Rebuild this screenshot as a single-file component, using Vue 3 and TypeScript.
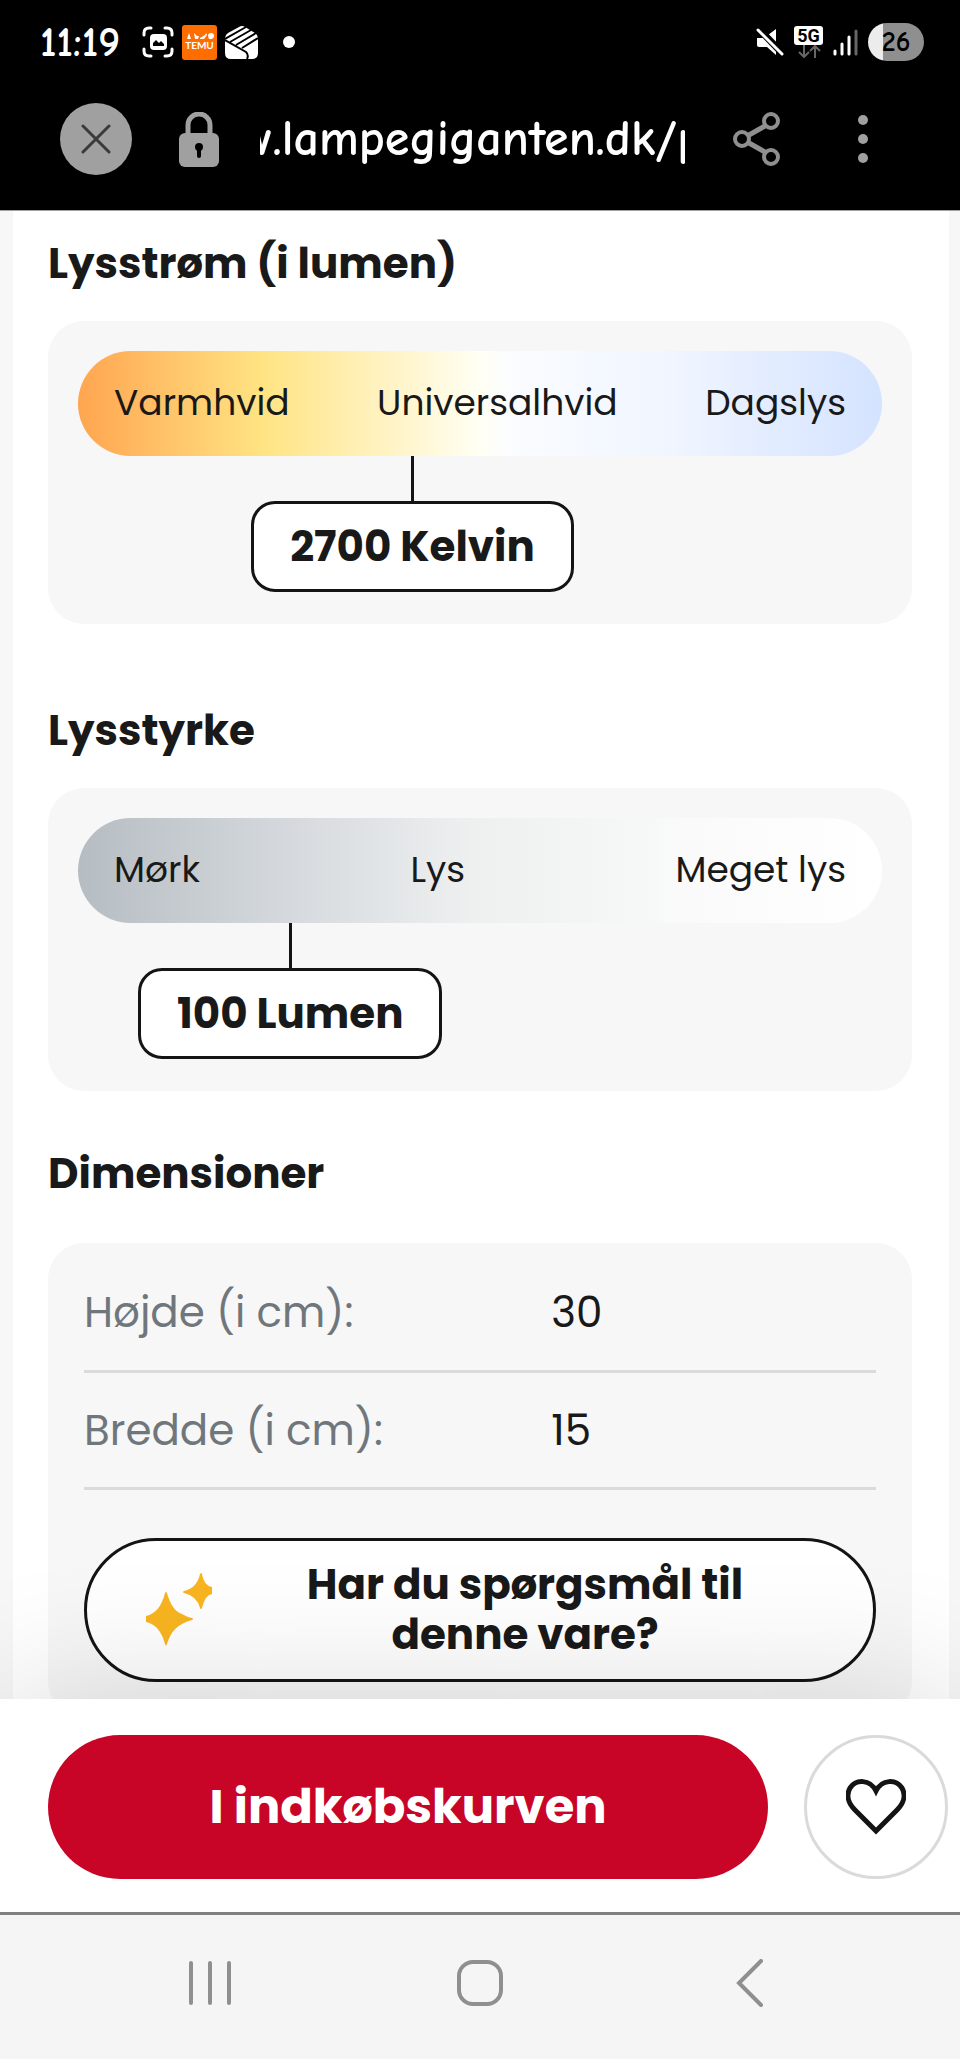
<script setup lang="ts">
interface Scale {
  title: string
  tone: string
  labels: string[]
  value: string
  position: number
}

interface Dimension {
  label: string
  value: string
}

const scales: Scale[] = [
  {
    title: 'Lysstrøm (i lumen)',
    tone: 'warmth',
    labels: ['Varmhvid', 'Universalhvid', 'Dagslys'],
    value: '2700 Kelvin',
    position: 41.6,
  },
  {
    title: 'Lysstyrke',
    tone: 'brightness',
    labels: ['Mørk', 'Lys', 'Meget lys'],
    value: '100 Lumen',
    position: 26.4,
  },
]

const dimensions: Dimension[] = [
  { label: 'Højde (i cm):', value: '30' },
  { label: 'Bredde (i cm):', value: '15' },
]
</script>

<template>
  <div class="phone">
    <div class="status">
      <div class="status-left">
        <span class="time">11:19</span>
        <svg class="capture" viewBox="0 0 32 32" width="32" height="32" aria-hidden="true">
          <g fill="none" stroke="#fff" stroke-width="3" stroke-linecap="round">
            <path d="M2 9V7q0-5 5-5h2M23 2h2q5 0 5 5v2M30 23v2q0 5-5 5h-2M9 30H7q-5 0-5-5v-2" />
          </g>
          <rect x="8" y="8" width="17" height="16" rx="4" fill="#fff" />
          <path d="M11 20v-3l3-3 3 3 2-2 3 3v2z" fill="#000" />
        </svg>
        <span class="temu">
          <svg viewBox="0 0 28 7" width="28" height="7" aria-hidden="true">
            <path
              d="M1 6l1-3 1-3 1 3 1 3zM8 0l3 3 2 0-1 3H9zM14 5l5-3 1-2 1 2-3 4h-4zM22 3q0-3 3-3t3 3v1l-2 2h-3z"
              fill="#fff"
            />
          </svg>
          <span>TEMU</span>
        </span>
        <svg class="cube" viewBox="0 0 33 33" width="33" height="33" aria-hidden="true">
          <path
            d="M14 1q3-2 6 0l10 6q3 2 3 5v15q0 6-6 6H6q-6 0-6-6V12q0-3 3-5z"
            fill="#fff"
          />
          <path
            d="M0 13L21 1M5 16L26 4M11 19L31 7M17 22L33 12M0 14l21 12q3 3 1 7"
            fill="none"
            stroke="#000"
            stroke-width="2"
          />
        </svg>
        <span class="dot"></span>
      </div>
      <div class="status-right">
        <svg viewBox="0 0 28 28" width="28" height="28" aria-hidden="true">
          <path d="M1 10h7L20 1v26l-9-8H3q-2 0-2-2z" fill="#fff" />
          <path d="M2 0l25 26" stroke="#000" stroke-width="7" />
          <path d="M2 2l24 24" stroke="#fff" stroke-width="3" stroke-linecap="round" />
        </svg>
        <span class="network">
          <span class="network-name">5G</span>
          <svg viewBox="0 0 24 13" width="24" height="13" aria-hidden="true">
            <path
              d="M7 0v11M2 7l5 5 5-5M18 13V2M13 6l5-5 5 5"
              fill="none"
              stroke="#666"
              stroke-width="2"
            />
          </svg>
        </span>
        <svg class="signal" viewBox="0 0 25 27" width="25" height="27" aria-hidden="true">
          <g stroke-width="3" stroke-linecap="round" stroke="#fff">
            <path d="M2 22v3M9 15v10M16 8v17" />
            <path d="M23 2v23" stroke="#666" />
          </g>
        </svg>
        <span class="battery">26</span>
      </div>
    </div>

    <header class="browser">
      <button class="close" type="button" aria-label="Luk">
        <svg viewBox="0 0 30 30" width="30" height="30" aria-hidden="true">
          <path d="M2 2l26 26M28 2L2 28" stroke="#3a3a3a" stroke-width="3" stroke-linecap="round" />
        </svg>
      </button>
      <svg class="lock" viewBox="0 0 40 55" width="40" height="55" aria-hidden="true">
        <path d="M9 24V13a11 11 0 0 1 22 0v11" fill="none" stroke="#a0a0a0" stroke-width="5" />
        <rect y="21" width="40" height="34" rx="6" fill="#a0a0a0" />
        <circle cx="20" cy="35" r="4" fill="#000" />
        <path d="M20 35v9" stroke="#000" stroke-width="4" stroke-linecap="round" />
      </svg>
      <a class="url" href="#"><span>w.lampegiganten.dk/p</span></a>
      <button class="share" type="button" aria-label="Del">
        <svg viewBox="0 0 48 54" width="48" height="54" aria-hidden="true">
          <g fill="none" stroke="#8f8f8f" stroke-width="4">
            <path d="M16 23l16-9M16 31l16 9" stroke-width="5" />
            <circle cx="9" cy="27" r="7" />
            <circle cx="38" cy="9" r="7" />
            <circle cx="38" cy="45" r="7" />
          </g>
        </svg>
      </button>
      <button class="more" type="button" aria-label="Flere muligheder">
        <svg viewBox="0 0 10 48" width="10" height="48" aria-hidden="true">
          <g fill="#a0a0a0">
            <circle cx="5" cy="5" r="5" />
            <circle cx="5" cy="24" r="5" />
            <circle cx="5" cy="43" r="5" />
          </g>
        </svg>
      </button>
    </header>

    <main class="page">
      <div class="sheet">
        <section v-for="scale in scales" :key="scale.title" class="group">
          <h2>{{ scale.title }}</h2>
          <div class="panel">
            <div class="bar" :class="scale.tone">
              <span v-for="label in scale.labels" :key="label">{{ label }}</span>
            </div>
            <div class="marker" :style="{ marginLeft: scale.position + '%' }">
              <span class="stem"></span>
              <strong class="badge">{{ scale.value }}</strong>
            </div>
          </div>
        </section>

        <section class="group dimensions">
          <h2>Dimensioner</h2>
          <div class="panel details">
            <table>
              <tbody>
                <tr v-for="row in dimensions" :key="row.label">
                  <th scope="row">{{ row.label }}</th>
                  <td>{{ row.value }}</td>
                </tr>
              </tbody>
            </table>
            <button class="question" type="button">
              <svg viewBox="0 0 68 74" width="68" height="74" aria-hidden="true">
                <g fill="#f9b520">
                  <path
                    d="M20 20q1-2 2 0 5 18 15 21 5 3 10 4 2 1 0 2-20 5-25 24-1 3-2 0Q15 52 1 49V43Q15 40 20 20z"
                  />
                  <path
                    d="M55 1q1-2 2 0 2 12 10 13v7q-7 1-10 14-1 2-2 0-3-12-16-15-2-1 0-2Q52 15 55 1z"
                  />
                </g>
              </svg>
              <span>Har du spørgsmål til denne vare?</span>
            </button>
          </div>
        </section>
      </div>
    </main>

    <div class="buy">
      <button class="cart" type="button">I indkøbskurven</button>
      <button class="favourite" type="button" aria-label="Gem som favorit">
        <svg viewBox="0 0 60 56" width="60" height="56" aria-hidden="true">
          <path
            d="M30 52L9 31C2 24 0 16 4 9 10 0 24 0 30 12 36 0 50 0 56 9c4 7 2 15-5 22z"
            fill="none"
            stroke="#141414"
            stroke-width="5"
          />
        </svg>
      </button>
    </div>

    <nav class="system">
      <button type="button" aria-label="Seneste apps">
        <svg viewBox="0 0 44 48" width="44" height="48" aria-hidden="true">
          <path d="M3 4v40M22 4v40M41 4v40" stroke="#8f8f8f" stroke-width="4" stroke-linecap="round" />
        </svg>
      </button>
      <button type="button" aria-label="Hjem">
        <svg viewBox="0 0 48 48" width="48" height="48" aria-hidden="true">
          <rect x="3" y="3" width="42" height="42" rx="14" fill="none" stroke="#8f8f8f" stroke-width="4" />
        </svg>
      </button>
      <button type="button" aria-label="Tilbage">
        <svg viewBox="0 0 28 48" width="28" height="48" aria-hidden="true">
          <path d="M25 2L3 24l22 22" fill="none" stroke="#8f8f8f" stroke-width="4" stroke-linecap="round" />
        </svg>
      </button>
    </nav>
  </div>
</template>

<style>
body {
  margin: 0;
}
</style>

<style scoped>
.phone {
  display: flex;
  flex-direction: column;
  height: 100vh;
  background: #f7f7f7;
  color: #191919;
  font-family: Poppins, Inter, 'Liberation Sans', sans-serif;
}

.phone * {
  box-sizing: border-box;
}

svg {
  display: block;
  flex: none;
}

button {
  display: flex;
  align-items: center;
  justify-content: center;
  padding: 0;
  border: 0;
  background: none;
  color: inherit;
  font: inherit;
}

.status {
  display: flex;
  flex: none;
  justify-content: space-between;
  height: 76px;
  padding: 8px 36px 0 40px;
  background: #000;
  color: #fff;
  font-family: 'Comic Neue', Lato, sans-serif;
}

.status-left,
.status-right {
  display: flex;
  align-items: center;
}

.time {
  width: 84px;
  font-size: 42px;
  font-weight: 700;
}

.capture {
  margin-left: 18px;
}

.temu {
  display: flex;
  flex-direction: column;
  align-items: center;
  justify-content: center;
  width: 35px;
  height: 35px;
  margin: 0 8px;
  border-radius: 3px;
  background: #ff6d00;
  font-family: Lato, sans-serif;
  font-size: 10px;
  font-weight: 700;
  line-height: 11px;
}

.dot {
  width: 12px;
  height: 12px;
  margin-left: 25px;
  border-radius: 50%;
  background: #fff;
}

.status-right {
  gap: 10px;
}

.network {
  display: flex;
  flex-direction: column;
  align-items: center;
}

.network-name {
  width: 29px;
  border-radius: 3px;
  background: #fff;
  color: #000;
  font-family: Roboto, sans-serif;
  font-size: 18px;
  font-weight: 700;
  line-height: 19px;
  text-align: center;
}

.battery {
  width: 56px;
  height: 38px;
  border-radius: 19px;
  background: linear-gradient(90deg, #ececec 26%, #8f8f8f 26%);
  color: #000;
  font-size: 28px;
  font-weight: 700;
  line-height: 38px;
  text-align: center;
}

.browser {
  display: flex;
  flex: none;
  align-items: center;
  height: 135px;
  padding: 0 74px 8px 60px;
  border-bottom: 1px solid #a0a0a0;
  background: #000;
}

.close {
  flex: none;
  width: 72px;
  height: 72px;
  border-radius: 50%;
  background: #a0a0a0;
}

.lock {
  margin: 0 41px 0 47px;
}

.url {
  display: flex;
  flex: 1;
  justify-content: center;
  min-width: 0;
  overflow: hidden;
  color: #fff;
  font-family: 'Comic Neue', Lato, sans-serif;
  font-size: 50px;
  font-weight: 700;
  line-height: 64px;
  text-decoration: none;
  white-space: nowrap;
}

.share {
  flex: none;
  margin-left: 48px;
}

.more {
  flex: none;
  width: 46px;
  margin-left: 59px;
}

.page {
  flex: 1;
  min-height: 0;
  overflow: auto;
  scrollbar-width: none;
}

.sheet {
  margin: 0 11px 0 13px;
  padding: 28px 37px 36px 35px;
  background: #fff;
}

.group + .group {
  margin-top: 82px;
}

.group + .dimensions {
  margin-top: 58px;
}

h2 {
  margin: 0 0 32px;
  font-size: 42px;
  font-weight: 700;
  line-height: 50px;
}

.dimensions h2 {
  margin-bottom: 44px;
}

.panel {
  padding: 30px 30px 32px;
  border-radius: 36px;
  background: #f7f7f7;
}

.bar {
  display: flex;
  align-items: center;
  justify-content: space-between;
  height: 105px;
  padding: 0 36px 2px;
  border-radius: 53px;
  font-size: 36px;
}

.warmth {
  background: linear-gradient(90deg, #ffa550, #ffe483 23%, #fffff4 50%, #fafcff 54%, #f0f5ff 74%, #d4e3ff);
}

.brightness {
  background: linear-gradient(90deg, #b6bdc2, #d6dade 27%, #eef0f0 49%, #f5f8f7 70%, #fafafa 75%, #fff);
}

.marker {
  display: flex;
  flex-direction: column;
  align-items: center;
  width: 0;
}

.stem {
  width: 3px;
  height: 45px;
  background: #141414;
}

.badge {
  padding: 0 36px;
  border: 3px solid #141414;
  border-radius: 24px;
  background: #fff;
  font-size: 42px;
  line-height: 85px;
  white-space: nowrap;
}

.details {
  padding: 11px 36px 36px;
}

table {
  width: 100%;
  border-collapse: collapse;
  font-size: 42px;
}

th,
td {
  height: 117px;
  padding: 2px 0 0;
  border-bottom: 3px solid #dadbdc;
  text-align: left;
}

th {
  width: 59%;
  color: #70777c;
  font-weight: 400;
}

.question {
  width: 100%;
  min-height: 144px;
  margin-top: 48px;
  padding: 0 58px;
  border: 3px solid #141414;
  border-radius: 72px;
  background: #fff;
  font-size: 42px;
  font-weight: 700;
  line-height: 50px;
}

.question span {
  flex: 1;
  padding: 0 58px 0 80px;
}

.buy {
  position: relative;
  display: flex;
  flex: none;
  gap: 36px;
  padding: 36px 12px 33px 48px;
  background: #fff;
  box-shadow: 0 0 144px rgba(0, 0, 0, 0.16);
}

.cart {
  flex: 1;
  height: 144px;
  border-radius: 72px;
  background: #c80527;
  color: #fff;
  font-size: 48px;
  font-weight: 700;
}

.favourite {
  flex: none;
  width: 144px;
  height: 144px;
  border: 3px solid #d8dadc;
  border-radius: 50%;
}

.system {
  position: relative;
  display: flex;
  flex: none;
  justify-content: space-around;
  height: 147px;
  padding: 0 75px 8px;
  border-top: 3px solid #808080;
  background: #f5f5f5;
}

.system button {
  width: 140px;
}
</style>
